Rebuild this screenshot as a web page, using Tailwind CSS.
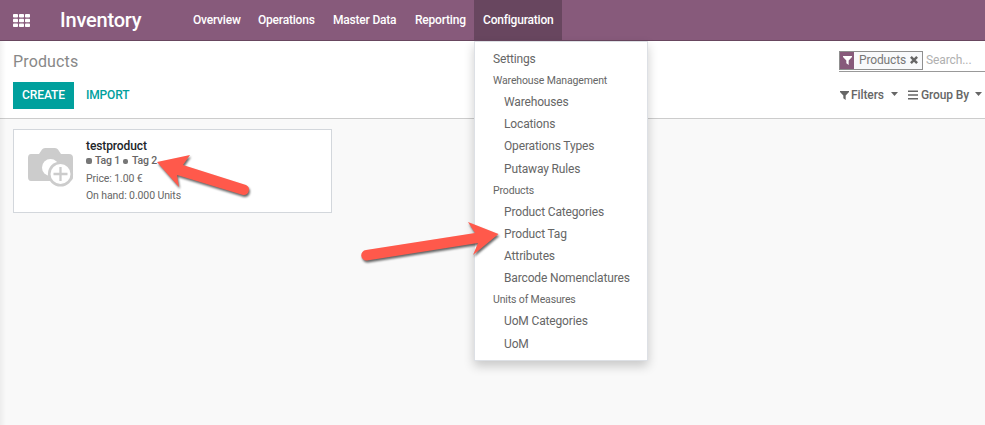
<!DOCTYPE html>
<html lang="en">
<head>
<meta charset="utf-8">
<title>Products</title>
<script src="https://cdn.jsdelivr.net/npm/@tailwindcss/browser@4"></script>
</head>
<body class="relative w-[985px] h-[425px] overflow-hidden bg-[#f9f9f9] font-['Roboto',sans-serif] text-[12px] leading-[16px] text-[#666]">
<header class="flex h-[41px] border-b border-[#68465f] bg-[#875a7b] text-white">
  <div class="flex w-[60px] items-center pl-[13px]">
    <svg class="h-[13px] w-[17px]" viewBox="0 0 17 13" fill="#fff"><g id="r"><rect x="0" y="0" width="5" height="3.6" rx=".8"/><rect x="6" y="0" width="5" height="3.6" rx=".8"/><rect x="12" y="0" width="5" height="3.6" rx=".8"/></g><use href="#r" y="4.7"/><use href="#r" y="9.4"/></svg>
  </div>
  <div class="w-[124px] text-[20px] leading-[41px] tracking-[-0.2px] font-medium">Inventory</div>
  <nav class="flex font-medium leading-[40px] tracking-[-0.2px]">
    <a class="w-[65px] pl-[9px] whitespace-nowrap">Overview</a>
    <a class="w-[75px] pl-[9px] whitespace-nowrap">Operations</a>
    <a class="w-[82px] pl-[9px] whitespace-nowrap">Master Data</a>
    <a class="w-[68px] pl-[9px] whitespace-nowrap">Reporting</a>
    <a class="h-[40px] w-[88px] bg-[#68465f] pl-[9px] whitespace-nowrap">Configuration</a>
  </nav>
</header>
<section class="flex h-[78px] justify-between border-b border-[#ccc] bg-white pl-[13px]">
  <div>
    <h1 class="pt-[11px] text-[16px] leading-[20px] tracking-[0.15px] text-[#888]">Products</h1>
    <div class="mt-[10px] flex h-[27px] items-start font-medium">
      <button class="h-[27px] w-[61px] bg-[#00a09d] pb-[2px] tracking-[-0.1px] text-white">CREATE</button>
      <a class="ml-[12px] pt-[5px] tracking-[-0.15px] text-[#00a09d]">IMPORT</a>
    </div>
  </div>
  <div class="w-[146px]">
    <div class="mt-[10px] flex h-[21px] border-b border-[#999]">
      <div class="flex h-[19px] w-[84px] border border-[#8f8f8f] bg-[#f8f9fb]">
        <span class="flex w-[14px] items-center justify-center bg-[#875a7b]"><svg class="h-[9px] w-[9px]" viewBox="0 0 10 10" fill="#fff"><path d="M0 0H10V1.2L6.3 5V10L3.7 8V5L0 1.2Z"/></svg></span>
        <span class="w-[52px] pl-[5px] leading-[17px] tracking-[-0.15px] text-[#777]">Products</span>
        <svg class="mt-[4px] ml-[4px] h-[8px] w-[8px]" viewBox="0 0 8 8" stroke="#666" stroke-width="2.5"><path d="M.9.9 7.1 7.1M7.1.9.9 7.1"/></svg>
      </div>
      <span class="pl-[3px] leading-[18px] tracking-[-0.1px] text-[#b0b0b0]">Search...</span>
    </div>
    <div class="mt-[14px] flex h-[18px] items-center font-medium">
      <svg class="ml-px h-[9px] w-[9px]" viewBox="0 0 10 10" fill="#666"><path d="M0 0H10V1.2L6.3 5V10L3.7 8V5L0 1.2Z"/></svg>
      <span class="ml-[2px] w-[40px] tracking-[-0.1px]">Filters</span>
      <svg class="mb-[3px] h-[4px] w-[7px]" viewBox="0 0 7 4" fill="#666"><path d="M0 0H7L3.5 4Z"/></svg>
      <svg class="ml-[10px] h-[10px] w-[10px]" viewBox="0 0 10 10" fill="#666"><path d="M0 .5H10V2H0ZM0 4.3H10V5.800H0ZM0 8.100H10V9.600H0Z"/></svg>
      <span class="ml-[3px] w-[54px] tracking-[-0.1px] whitespace-nowrap">Group By</span>
      <svg class="mb-[3px] h-[4px] w-[7px]" viewBox="0 0 7 4" fill="#666"><path d="M0 0H7L3.5 4Z"/></svg>
    </div>
  </div>
</section>
<main class="pt-[10px] pl-[13px]">
  <article class="flex h-[84px] w-[319px] border border-[#d3d7dc] bg-white pt-[8px] text-[10.5px]">
    <svg class="mt-[9px] ml-[13px] h-[41px] w-[47px]" viewBox="0 0 47 41"><path fill="#ccc" d="M4 7H12L15 2.5Q16 1 18 1H28Q30 1 31 2.5L34 7H42Q46 7 46 11V30Q46 34 42 34H4Q1 34 1 30V11Q1 7 4 7Z"/><circle cx="23.5" cy="20.5" r="8.5" fill="#fff"/><circle cx="33.5" cy="27" r="12.6" fill="#ccc"/><circle cx="33.5" cy="27" r="10" fill="#fff"/><path stroke="#ccc" stroke-width="2.3" d="M26.5 27H40.5M33.5 20V34"/></svg>
    <div class="ml-[12px]">
      <h2 class="text-[12px] leading-[17px] font-medium tracking-[-0.1px] text-[#212529]">testproduct</h2>
      <div class="flex h-[12px] items-center font-medium tracking-[-0.2px] whitespace-nowrap">
        <i class="mr-[3px] size-[6px] shrink-0 rounded-[2px] bg-[#777]"></i><span class="w-[24px]">Tag 1</span>
        <i class="mr-[4px] ml-[4px] size-[5px] shrink-0 rounded-[2px] bg-[#777]"></i><span>Tag 2</span>
      </div>
      <p class="mt-[3px] leading-[17px] tracking-[-0.1px]">Price: 1.00 €</p>
      <p class="leading-[17px] tracking-[-0.1px]">On hand: 0.000 Units</p>
    </div>
  </article>
</main>
<div class="absolute top-[41px] left-0 h-[384px] w-[6px] bg-gradient-to-r from-black/5 to-transparent"></div>
<div class="absolute top-[41px] left-[474px] h-[320px] w-[174px] border border-[#dde0e5] bg-white pt-[6px] pl-[18px] leading-[22.15px] tracking-[-0.15px] shadow-[0_5px_10px_rgba(0,0,0,0.2)]">
  <div>Settings</div>
  <h3 class="text-[10.5px] leading-[21px] tracking-[-0.14px]">Warehouse Management</h3>
  <ul class="pl-[11px]"><li>Warehouses</li><li>Locations</li><li>Operations Types</li><li>Putaway Rules</li></ul>
  <h3 class="text-[10.5px] leading-[21px] tracking-[-0.14px]">Products</h3>
  <ul class="pl-[11px]"><li>Product Categories</li><li>Product Tag</li><li>Attributes</li><li>Barcode Nomenclatures</li></ul>
  <h3 class="text-[10.5px] leading-[21px] tracking-[-0.14px]">Units of Measures</h3>
  <ul class="pl-[11px]"><li>UoM Categories</li><li>UoM</li></ul>
</div>
<svg class="absolute inset-0 h-[425px] w-[985px] drop-shadow-[1px_2px_1px_rgba(0,0,0,0.6)]" viewBox="0 0 985 425" fill="#ff594b">
  <path d="M157 162 190 155 183 165 246 185A5.3 5.3 0 0 1 243 195L177 175 179 187Z"/>
  <path d="M498.500 234 468 222 475 233 366 250A5 5 0 0 0 367 260.500L478 243 473 255Z"/>
</svg>
</body>
</html>
